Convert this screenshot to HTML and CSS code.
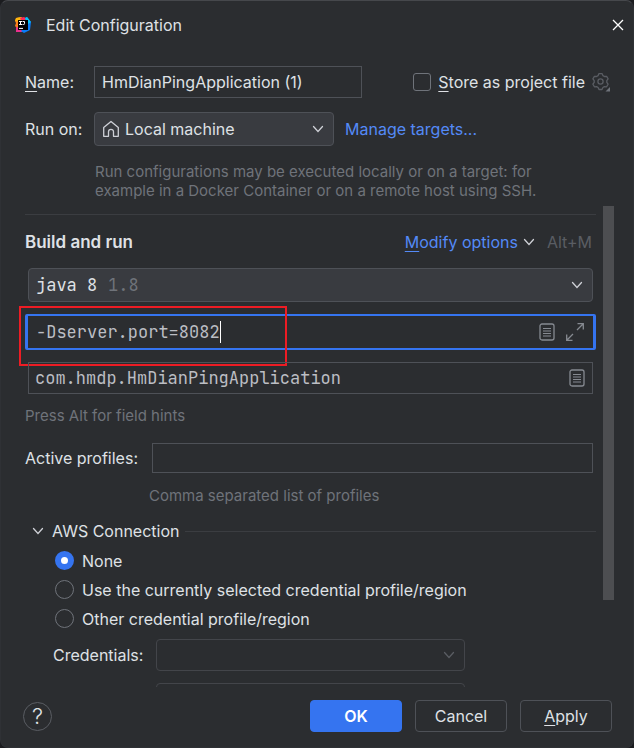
FILE: index.html
```html
<!DOCTYPE html>
<html lang="en">
<head>
    <meta charset="UTF-8">
    <meta name="viewport" content="width=device-width, initial-scale=1.0">
    <title>Edit Configuration</title>
    <link rel="stylesheet" href="styles.css">
</head>
<body>
    <!-- shared icons -->
    <svg class="sprite" aria-hidden="true">
        <symbol id="chevron" viewBox="0 0 16 16">
            <path d="M3.5 5.5L8 10.5L12.5 5.5" fill="none" stroke="currentColor" stroke-width="1.3" stroke-linecap="round"/>
        </symbol>
        <symbol id="list" viewBox="0 0 16 18">
            <rect x="1" y="1" width="14" height="16" rx="2" fill="none" stroke="currentColor" stroke-width="1.3"/>
            <path d="M4 5.5h8M4 8h8M4 10.5h8M4 13h8" stroke="currentColor" stroke-width="1.1"/>
        </symbol>
    </svg>

    <form class="dialog">
        <header class="titlebar">
            <svg class="logo" viewBox="0 0 16 16" aria-hidden="true">
                <path d="M1 1L7 0L9 8L3 15L1 15L2 11L0 9L1 6L0 4Z" fill="#fc801d"/>
                <path d="M1 1L6 0L5 5L0 4Z" fill="#fdb60d"/>
                <path d="M5 1L9 0L14 3L9 8Z" fill="#fe2857"/>
                <path d="M1 10L5 11L8 15L1 15Z" fill="#e8308c"/>
                <path d="M10 1L12 0L16 5L15 13L9 16L6 14L12 8Z" fill="#087cfa"/>
                <path d="M10 1L12 0L16 5L13 7Z" fill="#07c3f2"/>
                <rect x="3" y="3" width="10" height="10" fill="#000"/>
                <path d="M4 4.5h3M5.5 4.5v3M4 7.5h3M7.5 4.5H9.500v2.200q0 .8-.8.8H7.500M4 11.400h4" fill="none" stroke="#fff" stroke-width="1"/>
            </svg>
            <h1>Edit Configuration</h1>
            <button type="button" class="icon-button close" aria-label="Close">
                <svg viewBox="0 0 12 12"><path d="M1 1L11 11M11 1L1 11" stroke="#fff" stroke-width="1.3"/></svg>
            </button>
        </header>

        <section class="general">
            <div class="row name-row">
                <label class="row-label" for="name"><u>N</u>ame:</label>
                <input class="field name" type="text" id="name" value="HmDianPingApplication (1)">
                <div class="store">
                    <input type="checkbox" id="store">
                    <label for="store"><u>S</u>tore as project file</label>
                    <button type="button" class="icon-button gear" aria-label="Storage settings">
                        <svg viewBox="0 0 20 20">
                            <path d="M7.1 3.6L8 1.6h3l.9 2 1.5.9 2.2-.2 1.5 2.6-1.3 1.8v1.7l1.3 1.8-1.5 2.6-2.2-.2-1.5.9-.9 2H8l-.9-2-1.5-.9-2.2.2-1.5-2.6 1.3-1.8V8.7L1.9 6.900l1.500-2.600 2.200.2Z" fill="none" stroke="#5a5d63" stroke-width="1.3" stroke-linejoin="round"/>
                            <circle cx="9.5" cy="9.5" r="2.6" fill="none" stroke="#5a5d63" stroke-width="1.3"/>
                            <path d="M19 15v4.5h-4.5Z" fill="#6f737a"/>
                        </svg>
                    </button>
                </div>
            </div>
            <div class="row">
                <label class="row-label" for="target">Run on:</label>
                <div class="combo target">
                    <svg class="home" viewBox="0 0 18 18" aria-hidden="true">
                        <path d="M1.7 7.6L9 1.5l7.3 6.1v8.7h-4.8v-4.5a2.5 2.5 0 0 0-5 0v4.5H1.7Z" fill="none" stroke="#ced0d6" stroke-width="1.3" stroke-linejoin="round"/>
                    </svg>
                    <select id="target"><option>Local machine</option></select>
                    <svg class="chevron"><use href="#chevron"/></svg>
                </div>
                <a href="#targets">Manage targets...</a>
            </div>
            <p class="hint target-hint">Run configurations may be executed locally or on a target: for example in a Docker Container or on a remote host using SSH.</p>
        </section>

        <main class="scroll-area">
            <div class="content">
                <div class="build-head">
                    <h2>Build and run</h2>
                    <a href="#options"><u>M</u>odify options</a>
                    <svg class="chevron"><use href="#chevron"/></svg>
                    <span class="shortcut">Alt+M</span>
                </div>

                <div class="build-fields">
                    <div class="combo mono jre">
                        <select id="jre" aria-label="JRE"><option>java 8</option></select>
                        <span class="version">1.8</span>
                        <svg class="chevron"><use href="#chevron"/></svg>
                    </div>
                    <div class="text-box mono focused">
                        <input class="vm-options" type="text" aria-label="VM options" value="-Dserver.port=8082">
                        <span class="caret"></span>
                        <button type="button" class="icon-button" aria-label="Insert macros"><svg class="list"><use href="#list"/></svg></button>
                        <button type="button" class="icon-button" aria-label="Expand">
                            <svg class="expand" viewBox="0 0 20 20"><path d="M12 8L18 2M12.5 1.7h5.8v5.8M8 12L2 18M1.7 12.5v5.8h5.8" fill="none" stroke="currentColor" stroke-width="1.3"/></svg>
                        </button>
                        <div class="highlight"></div>
                    </div>
                    <div class="text-box mono main-class">
                        <input type="text" aria-label="Main class" value="com.hmdp.HmDianPingApplication">
                        <button type="button" class="icon-button" aria-label="Browse"><svg class="list"><use href="#list"/></svg></button>
                    </div>
                </div>
                <p class="hint">Press Alt for field hints</p>

                <div class="profiles">
                    <label for="profiles">Active profiles:</label>
                    <input class="field" type="text" id="profiles">
                </div>
                <p class="hint profiles-hint">Comma separated list of profiles</p>

                <div class="aws-head">
                    <svg class="chevron"><use href="#chevron"/></svg>
                    <h3>AWS Connection</h3>
                    <span class="rule"></span>
                </div>
                <div class="aws">
                    <div class="option"><input type="radio" name="aws" id="aws-none" checked><label for="aws-none">None</label></div>
                    <div class="option"><input type="radio" name="aws" id="aws-current"><label for="aws-current">Use the currently selected credential profile/region</label></div>
                    <div class="option"><input type="radio" name="aws" id="aws-other"><label for="aws-other">Other credential profile/region</label></div>
                    <div class="aws-row">
                        <label for="credentials">Credentials:</label>
                        <div class="combo disabled">
                            <select id="credentials" disabled><option></option></select>
                            <svg class="chevron"><use href="#chevron"/></svg>
                        </div>
                    </div>
                    <div class="aws-row">
                        <span></span>
                        <div class="combo disabled">
                            <select aria-label="Region" disabled><option></option></select>
                            <svg class="chevron"><use href="#chevron"/></svg>
                        </div>
                    </div>
                </div>
            </div>
            <div class="scrollbar"><div class="thumb"></div></div>
        </main>

        <footer class="footer">
            <button type="button" class="help" aria-label="Help">?</button>
            <button type="submit" class="button primary">OK</button>
            <button type="button" class="button">Cancel</button>
            <button type="button" class="button"><u>A</u>pply</button>
        </footer>
    </form>
</body>
</html>
```
FILE: styles.css
```css
* {
    box-sizing: border-box;
}
body {
    margin: 0;
    background: #1b1c1f;
    color: #dfe1e5;
    font-family: Inter, "Liberation Sans", sans-serif;
    font-size: 16px;
    line-height: 20px;
}
h1, h2, h3, p {
    margin: 0;
    font-size: 16px;
    font-weight: 400;
}
h2 {
    font-size: 17px;
    font-weight: 600;
}
input, select, button {
    font: inherit;
    color: inherit;
    margin: 0;
    padding: 0;
    border: none;
    background: none;
    outline: none;
}
select {
    appearance: none;
    opacity: 1;
}
u {
    text-underline-offset: 3px;
    text-decoration-thickness: 1px;
    text-decoration-skip-ink: none;
}
a {
    color: #548af7;
    text-decoration: none;
}
svg {
    display: block;
    flex: none;
}
.sprite {
    display: none;
}
.dialog {
    display: flex;
    flex-direction: column;
    height: 100vh;
    background: #2b2d30;
    border: 1px solid #2f3135;
    border-top-color: #46484c;
    border-radius: 8px;
    overflow: hidden;
}
.icon-button {
    display: flex;
    color: #868a91;
}

/* title bar */
.titlebar {
    display: flex;
    align-items: center;
    height: 48px;
    padding: 0 9px 0 14px;
}
.logo {
    width: 16px;
    height: 16px;
    margin-right: 15px;
}
.close {
    margin-left: auto;
}
.close svg {
    width: 12px;
    height: 12px;
}

/* name and target */
.general {
    padding: 17px 22px 0 24px;
}
.row {
    display: flex;
    align-items: center;
}
.name-row {
    margin-bottom: 14px;
}
.row-label {
    width: 69px;
}
.field {
    height: 32px;
    padding: 0 7px;
    border: 1px solid #4e5157;
}
.name {
    width: 268px;
}
.store {
    display: flex;
    align-items: center;
    margin-left: auto;
}
.store input {
    appearance: none;
    width: 18px;
    height: 18px;
    margin-right: 7px;
    border: 1px solid #6f737a;
    border-radius: 3px;
}
.gear {
    margin-left: 6px;
}
.gear svg {
    width: 20px;
    height: 20px;
}
.combo {
    display: flex;
    align-items: center;
    height: 34px;
    padding: 0 7px;
    background: #393b40;
    border: 1px solid #4e5157;
    border-radius: 4px;
}
.chevron {
    width: 16px;
    height: 16px;
    margin-left: auto;
    color: #ced0d6;
}
.target {
    width: 240px;
    margin-right: 11px;
}
.home {
    width: 18px;
    height: 18px;
    margin-right: 5px;
}
.hint {
    color: #6f737a;
    font-size: 15px;
    line-height: 19px;
}
.target-hint {
    margin: 16px 50px 6px 70px;
}

/* scrolled settings */
.scroll-area {
    display: flex;
    flex: 1;
    min-height: 0;
    overflow: hidden;
    padding: 0 19px 0 24px;
}
.content {
    flex: 1;
    min-width: 0;
}
.build-head {
    display: flex;
    align-items: center;
    height: 54px;
    margin-top: 8px;
    padding-right: 4px;
    border-top: 1px solid #3b3d41;
}
.build-head h2 {
    margin-right: auto;
}
.build-head .chevron {
    margin: 0 10px 0 3px;
}
.shortcut {
    color: #5a5d63;
}
.build-fields {
    margin: 0 3px 12px;
}
.mono {
    font-family: "JetBrains Mono", "DejaVu Sans Mono", "Liberation Mono", monospace;
    font-size: 17px;
}
.version {
    margin-left: 10px;
    color: #6f737a;
}
.text-box {
    position: relative;
    display: flex;
    align-items: center;
    height: 32px;
    padding: 0 7px 0 6px;
    border: 1px solid #4e5157;
    color: #bcbec4;
}
.text-box input {
    flex: 1;
    min-width: 0;
}
.focused {
    height: 36px;
    margin: 12px -3px;
    padding: 0 8px;
    border: 3px solid #3574f0;
    border-width: 2px 3px;
    border-radius: 2px;
}
.text-box .vm-options {
    flex: none;
    width: 18ch;
}
.caret {
    width: 1px;
    height: 22px;
    margin-right: auto;
    background: #fff;
}
.list {
    width: 16px;
    height: 18px;
}
.expand {
    width: 20px;
    height: 20px;
    margin-left: 10px;
}
.highlight {
    position: absolute;
    top: -10px;
    left: -9px;
    width: 268px;
    height: 60px;
    border: 2px solid #ed1c24;
    pointer-events: none;
}
.profiles {
    display: flex;
    align-items: center;
    gap: 14px;
    margin: 18px 3px 13px 0;
}
.profiles .field {
    flex: 1;
    height: 30px;
    min-width: 0;
}
.profiles-hint {
    margin-left: 124px;
}
.aws-head {
    display: flex;
    align-items: center;
    margin: 16px 0 5px 5px;
}
.aws-head .chevron {
    margin: 0 6px 0 0;
}
.rule {
    flex: 1;
    height: 1px;
    margin-left: 6px;
    background: #3b3d41;
}
.aws {
    padding-left: 28px;
}
.option {
    display: flex;
    align-items: center;
    height: 29px;
    padding-left: 2px;
}
.option input {
    appearance: none;
    width: 19px;
    height: 19px;
    margin-right: 8px;
    border: 1px solid #6f737a;
    border-radius: 50%;
}
.option input:checked {
    border: 6px solid #3574f0;
    background: #fff;
}
.aws-row {
    display: grid;
    grid-template-columns: 103px minmax(0, 309px);
    align-items: center;
    margin: 6px 0 12px;
}
.aws-row .combo {
    height: 32px;
}
.disabled {
    background: none;
    border-color: #43454a;
}
.disabled .chevron {
    color: #5a5d63;
}
.scrollbar {
    width: 11px;
    margin-left: 7px;
}
.thumb {
    height: 82%;
    background: #4d4e51;
}

/* buttons */
.footer {
    display: flex;
    align-items: center;
    gap: 13px;
    padding: 13px 21px 15px 22px;
}
.help {
    width: 29px;
    height: 29px;
    margin-right: auto;
    border: 1px solid #5a5d63;
    border-radius: 50%;
    font-size: 22px;
    font-weight: 300;
    line-height: 27px;
}
.button {
    width: 92px;
    height: 32px;
    border: 1px solid #4e5157;
    border-radius: 4px;
}
.primary {
    background: #3574f0;
    border-color: #3574f0;
    color: #fff;
    font-weight: 600;
}
```
